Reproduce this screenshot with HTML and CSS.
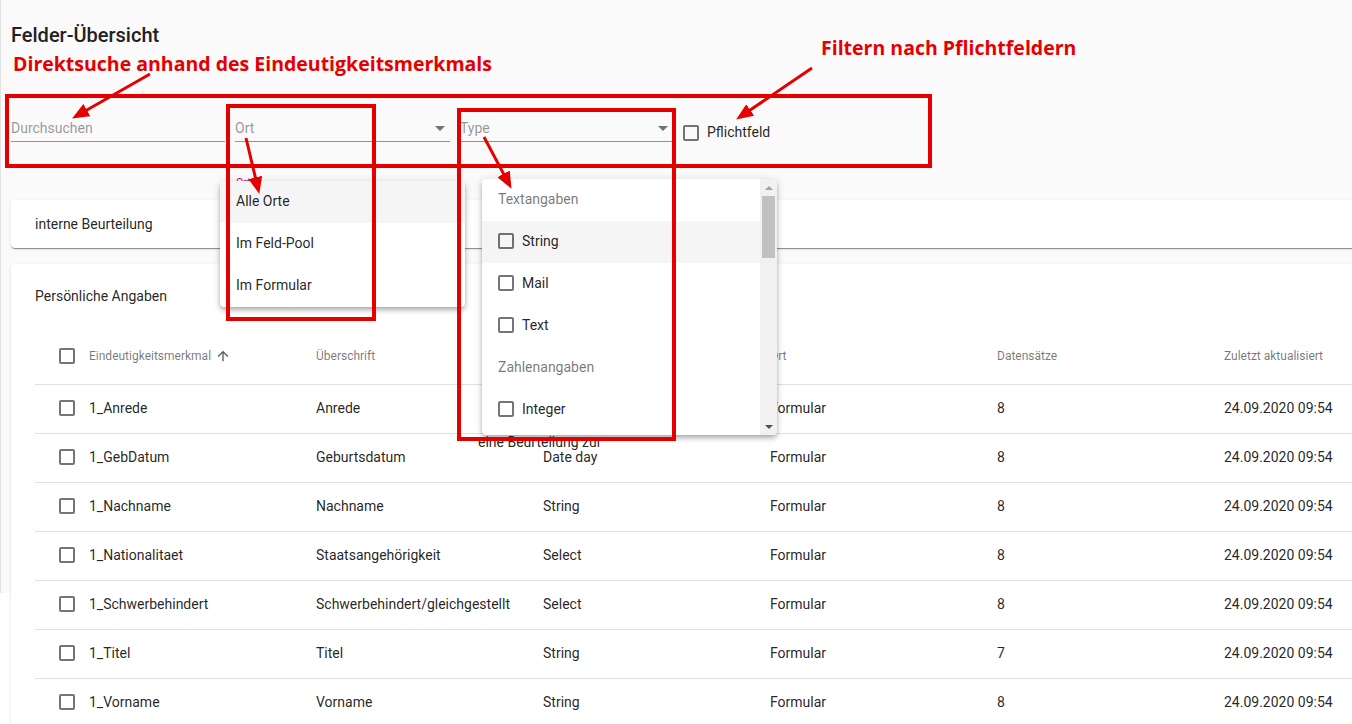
FILE: index.html
```html
<!DOCTYPE html>
<html lang="de">
<head>
<meta charset="utf-8">
<title>Felder-Übersicht</title>
<link rel="stylesheet" href="styles.css">
</head>
<body>
<div class="page">
  <h1 class="title">Felder-Übersicht</h1>
  <div class="filters">
    <div class="field search"><span class="placeholder">Durchsuchen</span></div>
    <div class="field ort"><span class="placeholder">Ort</span><span class="caret"></span></div>
    <div class="field type"><span class="placeholder">Type</span><span class="caret"></span></div>
    <label class="check-filter"><span class="cb"></span><span class="cb-label">Pflichtfeld</span></label>
  </div>

  <section class="card card-collapsed">interne Beurteilung</section>

  <section class="card card-table">
    <h2 class="card-title">Persönliche Angaben</h2>
    <div class="table">
      <div class="tr th">
        <div class="td sel"><span class="cb"></span></div>
        <div class="td sort">Eindeutigkeitsmerkmal
          <svg class="sort-icon" viewBox="0 0 24 24" width="16" height="16"><path d="M4 12l1.41 1.41L11 7.83V20h2V7.83l5.58 5.59L20 12l-8-8-8 8z"/></svg>
        </div>
        <div class="td">Überschrift</div>
        <div class="td"></div>
        <div class="td">Ort</div>
        <div class="td">Datensätze</div>
        <div class="td">Zuletzt aktualisiert</div>
      </div>
      <div class="tr row">
        <div class="td sel"><span class="cb"></span></div>
        <div class="td">1_Anrede</div><div class="td">Anrede</div><div class="td"></div>
        <div class="td">Formular</div><div class="td">8</div><div class="td">24.09.2020 09:54</div>
      </div>
      <div class="tr row">
        <div class="td sel"><span class="cb"></span></div>
        <div class="td">1_GebDatum</div><div class="td">Geburtsdatum</div><div class="td">Date day</div>
        <div class="td">Formular</div><div class="td">8</div><div class="td">24.09.2020 09:54</div>
      </div>
      <div class="tr row">
        <div class="td sel"><span class="cb"></span></div>
        <div class="td">1_Nachname</div><div class="td">Nachname</div><div class="td">String</div>
        <div class="td">Formular</div><div class="td">8</div><div class="td">24.09.2020 09:54</div>
      </div>
      <div class="tr row">
        <div class="td sel"><span class="cb"></span></div>
        <div class="td">1_Nationalitaet</div><div class="td">Staatsangehörigkeit</div><div class="td">Select</div>
        <div class="td">Formular</div><div class="td">8</div><div class="td">24.09.2020 09:54</div>
      </div>
      <div class="tr row">
        <div class="td sel"><span class="cb"></span></div>
        <div class="td">1_Schwerbehindert</div><div class="td">Schwerbehindert/gleichgestellt</div><div class="td">Select</div>
        <div class="td">Formular</div><div class="td">8</div><div class="td">24.09.2020 09:54</div>
      </div>
      <div class="tr row">
        <div class="td sel"><span class="cb"></span></div>
        <div class="td">1_Titel</div><div class="td">Titel</div><div class="td">String</div>
        <div class="td">Formular</div><div class="td">7</div><div class="td">24.09.2020 09:54</div>
      </div>
      <div class="tr row">
        <div class="td sel"><span class="cb"></span></div>
        <div class="td">1_Vorname</div><div class="td">Vorname</div><div class="td">String</div>
        <div class="td">Formular</div><div class="td">8</div><div class="td">24.09.2020 09:54</div>
      </div>
    </div>
  </section>
</div>

<div class="ghost-label">Ort</div>
<div class="ghost-text">eine Beurteilung zur</div>

<div class="menu menu-ort">
  <div class="opt active">Alle Orte</div>
  <div class="opt">Im Feld-Pool</div>
  <div class="opt">Im Formular</div>
</div>

<div class="menu menu-type">
  <div class="menu-list">
    <div class="group">Textangaben</div>
    <div class="opt active"><span class="cb"></span>String</div>
    <div class="opt"><span class="cb"></span>Mail</div>
    <div class="opt"><span class="cb"></span>Text</div>
    <div class="group">Zahlenangaben</div>
    <div class="opt"><span class="cb"></span>Integer</div>
  </div>
  <div class="scrollbar">
    <div class="sb-btn sb-up"></div>
    <div class="sb-thumb"></div>
    <div class="sb-space"></div>
    <div class="sb-btn sb-down"></div>
  </div>
</div>

<svg class="annot" width="1352" height="724" viewBox="0 0 1352 724">
  <defs>
    <marker id="ah" markerUnits="userSpaceOnUse" markerWidth="17" markerHeight="14" viewBox="0 -7 17 14" refX="8" refY="0" orient="auto">
      <path d="M0,-7 L17,0 L0,7 z" fill="#e50000"/>
    </marker>
  </defs>
  <g fill="none" stroke="#e50000" stroke-width="4">
    <rect x="7" y="96" width="923" height="70"/>
    <rect x="228" y="106" width="146" height="213"/>
    <rect x="459" y="110" width="215" height="329"/>
  </g>
  <g stroke="#e50000" stroke-width="3" marker-end="url(#ah)">
    <line x1="150" y1="74" x2="79.9" y2="114"/>
    <line x1="246" y1="138" x2="257.2" y2="185.2"/>
    <line x1="484" y1="137" x2="507.3" y2="180.9"/>
    <line x1="812" y1="68" x2="743.6" y2="114.5"/>
  </g>
</svg>
<div class="annot-text t1">Direktsuche anhand des Eindeutigkeitsmerkmals</div>
<div class="annot-text t2">Filtern nach Pflichtfeldern</div>
</body>
</html>
```

FILE: styles.css
```css
* { box-sizing: border-box; }
html, body { margin: 0; padding: 0; }
body {
  width: 1352px;
  height: 724px;
  overflow: hidden;
  position: relative;
  background: #fff;
  font-family: Roboto, "Noto Sans", Arial, sans-serif;
  font-size: 14px;
  color: rgba(0, 0, 0, 0.87);
}

.page {
  height: 593px;
  background: #fafafa;
  border-left: 1px solid #e2e2e2;
  padding: 23px 0 0 10px;
}

.title {
  margin: 0;
  font-size: 20px;
  font-weight: 500;
  line-height: 24px;
  color: #212121;
}

/* filter bar */
.filters {
  display: flex;
  align-items: flex-start;
  gap: 10px;
  margin-top: 72px;
}
.field {
  display: flex;
  align-items: center;
  line-height: 18px;
  padding-bottom: 4px;
  border-bottom: 1px solid rgba(0, 0, 0, 0.42);
}
.placeholder { flex: 1; color: rgba(0, 0, 0, 0.42); }
.search { width: 214px; }
.ort { width: 215px; }
.type { width: 213px; }
.caret {
  width: 0;
  height: 0;
  border-left: 5px solid transparent;
  border-right: 5px solid transparent;
  border-top: 5px solid rgba(0, 0, 0, 0.54);
  margin-right: 5px;
}
.check-filter {
  display: flex;
  align-items: center;
  gap: 8px;
  margin-top: 6px;
  height: 16px;
}
.cb-label { line-height: 16px; padding-bottom: 2px; }

.cb {
  flex: none;
  display: inline-block;
  width: 16px;
  height: 16px;
  border: 2px solid rgba(0, 0, 0, 0.54);
  border-radius: 2px;
}

/* cards */
.card {
  width: 1464px;
  background: #fff;
  border-radius: 4px;
  box-shadow: 0 2px 1px -1px rgba(0, 0, 0, 0.2), 0 1px 1px 0 rgba(0, 0, 0, 0.14), 0 1px 3px 0 rgba(0, 0, 0, 0.12);
}
.card-collapsed {
  margin-top: 58px;
  height: 48px;
  padding: 0 24px 1px;
  display: flex;
  align-items: center;
  box-shadow: 0 1px 0 rgba(0, 0, 0, 0.22), 0 2px 1px -1px rgba(0, 0, 0, 0.2), 0 1px 3px 0 rgba(0, 0, 0, 0.12);
}
.card-table {
  margin-top: 16px;
  padding: 22px 0 0 24px;
  height: 520px;
}
.card-title {
  margin: 0 0 22px;
  font-size: 14px;
  font-weight: 400;
  line-height: 20px;
}

/* table */
.tr {
  display: grid;
  grid-template-columns: 54px repeat(6, 227px);
  align-items: center;
  border-bottom: 1px solid rgba(0, 0, 0, 0.12);
}
.th { height: 57px; }
.row { height: 49px; padding-bottom: 2px; }
.td { white-space: nowrap; }
.th .td { font-size: 12px; color: rgba(0, 0, 0, 0.54); }
.sel { padding-left: 24px; display: flex; align-items: center; }
.sort { display: flex; align-items: center; gap: 4px; }
.sort-icon { fill: rgba(0, 0, 0, 0.64); }

/* overlays under menus */
.ghost-label {
  position: absolute;
  left: 236px;
  top: 177px;
  font-size: 10.5px;
  line-height: 12px;
  color: #c2185b;
  z-index: 2;
}
.ghost-text {
  position: absolute;
  left: 478px;
  top: 435px;
  line-height: 14px;
  z-index: 2;
}

/* dropdown menus */
.menu {
  position: absolute;
  z-index: 5;
  background: #fff;
  border-radius: 4px;
  overflow: hidden;
  box-shadow: 0 2px 4px -1px rgba(0, 0, 0, 0.2), 0 4px 5px 0 rgba(0, 0, 0, 0.14), 0 1px 10px 0 rgba(0, 0, 0, 0.12);
}
.menu-ort { left: 220px; top: 181px; width: 245px; }
.menu-type { left: 482px; top: 179px; width: 295px; height: 256px; display: flex; }
.menu-list { flex: 1; min-width: 0; }
.opt {
  height: 42px;
  display: flex;
  align-items: center;
  gap: 8px;
  padding: 0 16px 2px;
}
.opt.active { background: #f5f5f5; }
.group {
  height: 42px;
  display: flex;
  align-items: center;
  padding: 0 16px 2px;
  color: rgba(0, 0, 0, 0.54);
}
.scrollbar {
  width: 17px;
  background: #f1f1f1;
  display: flex;
  flex-direction: column;
}
.sb-btn {
  height: 17px;
  display: flex;
  align-items: center;
  justify-content: center;
}
.sb-up::before, .sb-down::before {
  content: "";
  width: 0;
  height: 0;
  border-left: 4px solid transparent;
  border-right: 4px solid transparent;
}
.sb-up::before { border-bottom: 4px solid #a3a3a3; }
.sb-down::before { border-top: 4px solid #505050; }
.sb-thumb { height: 62px; margin: 0 2px; background: #c1c1c1; }
.sb-space { flex: 1; }

/* annotations */
.annot {
  position: absolute;
  left: 0;
  top: 0;
  z-index: 10;
  pointer-events: none;
}
.annot-text {
  position: absolute;
  z-index: 11;
  font-family: "Open Sans", "Noto Sans", sans-serif;
  font-weight: 700;
  font-size: 19.5px;
  line-height: 20px;
  color: #e50000;
  white-space: nowrap;
}
.t1 { left: 13px; top: 54px; }
.t2 { left: 821px; top: 38px; }
```
